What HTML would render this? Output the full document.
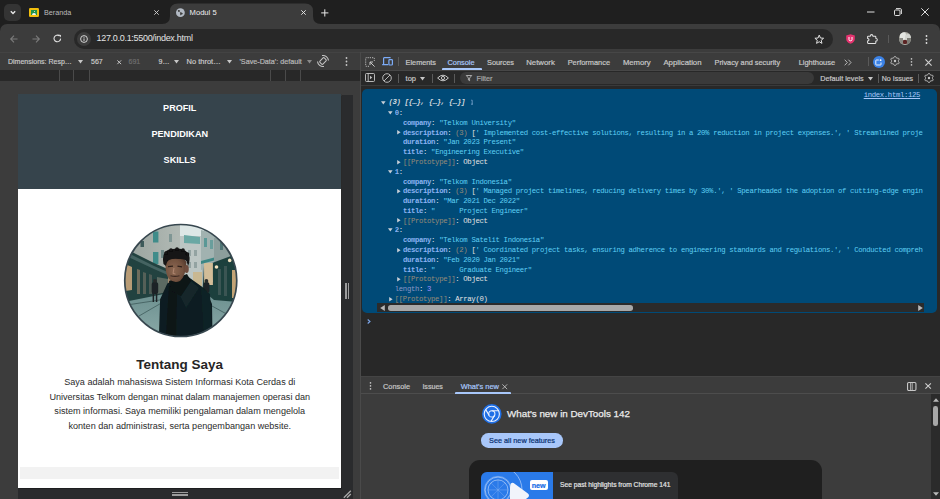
<!DOCTYPE html>
<html><head><meta charset="utf-8">
<style>
*{box-sizing:border-box;margin:0;padding:0}
html,body{width:940px;height:499px;overflow:hidden;background:#1f1f1f;font-family:"Liberation Sans",sans-serif;color:#e3e3e3;position:relative}
.a{position:absolute}
.t{position:absolute;white-space:pre;line-height:1}
.u{-webkit-text-stroke:0.2px currentColor}
svg{position:absolute;overflow:visible}
.m{font-family:"Liberation Mono",monospace}
</style></head><body>
<!-- TAB STRIP -->
<div class="a" style="left:0;top:0;width:940px;height:24px;background:#1f1f1f"></div>
<div class="a" style="left:4px;top:4px;width:17px;height:16.5px;background:#343434;border-radius:5px"></div>
<svg style="left:10px;top:10px" width="6" height="5" viewBox="0 0 6 5"><path d="M0.8 1.2 L3 3.4 L5.2 1.2" fill="none" stroke="#e8e8e8" stroke-width="1.4"/></svg>
<!-- classroom favicon -->
<div class="a" style="left:29.2px;top:8px;width:10px;height:8.5px;background:#f2bf0e;border-radius:1.2px"></div>
<div class="a" style="left:31px;top:9.8px;width:6.4px;height:5px;background:#21934a"></div>
<div class="a" style="left:33.5px;top:10.6px;width:1.5px;height:1.5px;background:#e8f0e8;border-radius:1px"></div>
<div class="a" style="left:32.4px;top:12.8px;width:3.8px;height:2px;background:#f4f6f0;border-radius:2px 2px 0 0"></div>
<div class="t" style="left:44px;top:9.3px;font-size:7.2px;color:#bdbdbd">Beranda</div>
<svg style="left:154.2px;top:10.2px" width="5" height="5" viewBox="0 0 5 5"><path d="M0.3 0.3L4.7 4.7M4.7 0.3L0.3 4.7" stroke="#d0d0d0" stroke-width="0.95"/></svg>
<!-- active tab -->
<svg style="left:162px;top:3.3px" width="160" height="21" viewBox="0 0 160 21"><path d="M0 21 Q8 21 8 13 L8 8 Q8 0.5 16 0.5 L143 0.5 Q151 0.5 151 8 L151 13 Q151 21 159 21 Z" fill="#3c3c3c"/></svg>
<svg style="left:175.8px;top:7.6px" width="9" height="9.4" viewBox="0 0 9 9.4"><circle cx="4.4" cy="4.7" r="4.4" fill="#b3bac4"/><path d="M1.8 2.2Q3 1.6 4 2.4Q4.4 3.4 3.4 3.8Q2.6 4.2 2.2 3.4Z" fill="#3c3c3c"/><path d="M3.8 4.4Q5.4 4.2 6.6 5.2Q7.2 6 6.2 6.2Q5 6.4 4.6 7.4Q4 6.6 4.2 5.6Z" fill="#3c3c3c"/></svg>
<div class="t" style="left:189.6px;top:9.2px;font-size:7.6px;color:#f0f0f0">Modul 5</div>
<svg style="left:300.8px;top:10.2px" width="5" height="5" viewBox="0 0 5 5"><path d="M0.3 0.3L4.7 4.7M4.7 0.3L0.3 4.7" stroke="#e8e8e8" stroke-width="0.95"/></svg>
<svg style="left:321px;top:9px" width="8" height="8" viewBox="0 0 8 8"><path d="M3.8 0.3V7.5M0.2 3.9H7.4" stroke="#e8e8e8" stroke-width="1"/></svg>
<!-- window controls -->
<svg style="left:867px;top:11px" width="8" height="2" viewBox="0 0 8 2"><path d="M0 1H7.5" stroke="#e0e0e0" stroke-width="1"/></svg>
<svg style="left:894px;top:8px" width="8" height="8" viewBox="0 0 8 8"><rect x="0.5" y="2" width="5.5" height="5.5" rx="1" fill="none" stroke="#e0e0e0" stroke-width="1"/><path d="M2 0.6H6.2Q7.4 0.6 7.4 1.8V6" fill="none" stroke="#e0e0e0" stroke-width="1"/></svg>
<svg style="left:921px;top:8px" width="8" height="8" viewBox="0 0 8 8"><path d="M0.3 0.3L7.7 7.7M7.7 0.3L0.3 7.7" stroke="#e0e0e0" stroke-width="1"/></svg>
<!-- TOOLBAR -->
<div class="a" style="left:0;top:24px;width:940px;height:29px;background:#3c3c3c;border-radius:7px 7px 0 0"></div>
<svg style="left:9.5px;top:34.5px" width="8" height="8" viewBox="0 0 8 8"><path d="M7.5 4H0.8M4 0.7L0.7 4L4 7.3" fill="none" stroke="#7b7b7b" stroke-width="1.1"/></svg>
<svg style="left:31.5px;top:34.5px" width="8" height="8" viewBox="0 0 8 8"><path d="M0.5 4H7.2M4 0.7L7.3 4L4 7.3" fill="none" stroke="#7b7b7b" stroke-width="1.1"/></svg>
<svg style="left:53px;top:34px" width="9" height="9" viewBox="0 0 9 9"><path d="M7.6 4.6A3.3 3.3 0 1 1 6.4 1.9" fill="none" stroke="#e0e0e0" stroke-width="1.1"/><path d="M5.2 0.6L8 0.9L7.7 3.6Z" fill="#e0e0e0"/></svg>
<div class="a" style="left:74px;top:28.7px;width:759px;height:20.1px;background:#282828;border-radius:10px"></div>
<div class="a" style="left:76.5px;top:31.7px;width:14px;height:14px;background:#3c3c3c;border-radius:7px"></div>
<svg style="left:79.5px;top:34.7px" width="8" height="8" viewBox="0 0 8 8"><circle cx="4" cy="4" r="3.4" fill="none" stroke="#e3e3e3" stroke-width="0.9"/><path d="M4 3.4V6" stroke="#e3e3e3" stroke-width="0.9"/><circle cx="4" cy="2.2" r="0.5" fill="#e3e3e3"/></svg>
<div class="t" style="left:96.5px;top:34.4px;font-size:9px;letter-spacing:-0.3px;color:#e3e3e3">127.0.0.1:5500/index.html</div>
<svg style="left:813.8px;top:34.4px" width="10.5" height="10" viewBox="0 0 24 23"><path d="M12 2.5L14.8 9.2L22 9.8L16.5 14.5L18.2 21.5L12 17.8L5.8 21.5L7.5 14.5L2 9.8L9.2 9.2Z" fill="none" stroke="#e3e3e3" stroke-width="2.3" stroke-linejoin="round"/></svg>
<svg style="left:845.5px;top:34.2px" width="9" height="10" viewBox="0 0 9 10"><path d="M4.5 0.2L8.8 1.6V5Q8.8 8.2 4.5 9.8Q0.2 8.2 0.2 5V1.6Z" fill="#e5336f"/><path d="M3 3V5.6Q3 6.8 4.5 6.8Q6 6.8 6 5.6V3" fill="none" stroke="#fff" stroke-width="1"/></svg>
<svg style="left:866.8px;top:34px" width="11" height="10" viewBox="0 0 11 10"><path d="M1.2 2.2H3.2Q3.4 0.6 4.6 0.6Q5.8 0.6 6 2.2H8.2Q8.8 2.2 8.8 2.8V4.2Q10.3 4.4 10.3 5.7Q10.3 7 8.8 7.2V8.8Q8.8 9.4 8.2 9.4H1.2Q0.6 9.4 0.6 8.8V7Q2 6.8 2 5.7Q2 4.6 0.6 4.4V2.8Q0.6 2.2 1.2 2.2Z" fill="none" stroke="#e3e3e3" stroke-width="1.05"/></svg>
<div class="a" style="left:888px;top:34.7px;width:1px;height:8.2px;background:#5a5a5a"></div>
<div class="a" style="left:898.7px;top:32px;width:12.5px;height:12.5px;border-radius:50%;background:#b4b4ac;overflow:hidden"><div class="a" style="left:1px;top:0;width:6px;height:8px;background:#e4e6e2;border-radius:3px"></div><div class="a" style="left:6px;top:2px;width:6px;height:7px;background:#d2d4cf;border-radius:3px"></div><div class="a" style="left:0;top:6px;width:4px;height:6px;background:#8a8a84"></div><div class="a" style="left:8.5px;top:6px;width:4px;height:6px;background:#7c7c76"></div><div class="a" style="left:4.3px;top:7.8px;width:4px;height:4.7px;background:#5a2424;border-radius:1px"></div></div>
<svg style="left:925px;top:34.5px" width="3" height="9" viewBox="0 0 3 9"><circle cx="1.5" cy="1" r="0.9" fill="#e3e3e3"/><circle cx="1.5" cy="4.5" r="0.9" fill="#e3e3e3"/><circle cx="1.5" cy="8" r="0.9" fill="#e3e3e3"/></svg>
<!-- DEVICE TOOLBAR -->
<div class="a" style="left:0;top:52px;width:360px;height:18px;background:#3c3c3c;border-top:1px solid #434343"></div>
<div class="t u" style="left:8px;top:58px;font-size:7px;color:#c7c7c7">Dimensions: Resp…</div>
<svg style="left:77.5px;top:59.5px" width="5" height="4" viewBox="0 0 5 4"><path d="M0 0H5L2.5 3.5Z" fill="#c7c7c7"/></svg>
<div class="t u" style="left:91px;top:58px;font-size:7px;color:#c7c7c7">567</div>
<svg style="left:117.3px;top:59.6px" width="4.5" height="4.5" viewBox="0 0 5 5"><path d="M0.4 0.4L4.6 4.6M4.6 0.4L0.4 4.6" stroke="#c7c7c7" stroke-width="1.1"/></svg>
<div class="t u" style="left:128.5px;top:58px;font-size:7px;color:#6e6e6e">691</div>
<div class="t u" style="left:158.5px;top:58px;font-size:7px;color:#c7c7c7">9…</div>
<svg style="left:174px;top:59.5px" width="5" height="4" viewBox="0 0 5 4"><path d="M0 0H5L2.5 3.5Z" fill="#c7c7c7"/></svg>
<div class="t u" style="left:186.5px;top:57.8px;font-size:7.5px;color:#c7c7c7">No throt…</div>
<svg style="left:227px;top:59.5px" width="5" height="4" viewBox="0 0 5 4"><path d="M0 0H5L2.5 3.5Z" fill="#c7c7c7"/></svg>
<div class="t u" style="left:239.5px;top:58px;font-size:7.2px;color:#b8b8b8">'Save-Data': default</div>
<svg style="left:307px;top:59.5px" width="5" height="4" viewBox="0 0 5 4"><path d="M0 0H5L2.5 3.5Z" fill="#8a8a8a"/></svg>
<svg style="left:317.3px;top:55.3px" width="12" height="12" viewBox="0 0 12 12"><g transform="rotate(45 6 6)"><rect x="3.9" y="2.9" width="4.2" height="6.2" rx="0.9" fill="none" stroke="#c7c7c7" stroke-width="1"/></g><path d="M5.04 0.58A5.5 5.5 0 0 1 11.48 5.52" fill="none" stroke="#c7c7c7" stroke-width="1.1"/><path d="M6.96 11.42A5.5 5.5 0 0 1 0.52 6.48" fill="none" stroke="#c7c7c7" stroke-width="1.1"/></svg>
<svg style="left:344.5px;top:57px" width="3" height="9" viewBox="0 0 3 9"><circle cx="1.5" cy="1" r="0.9" fill="#c7c7c7"/><circle cx="1.5" cy="4.5" r="0.9" fill="#c7c7c7"/><circle cx="1.5" cy="8" r="0.9" fill="#c7c7c7"/></svg>
<!-- RULER -->
<div class="a" style="left:0;top:70px;width:360px;height:11px;background:#282828"></div>
<div class="a" style="left:58.8px;top:70px;width:1px;height:11px;background:#4a4a4a"></div>
<div class="a" style="left:73px;top:70px;width:1px;height:11px;background:#4a4a4a"></div>
<div class="a" style="left:88.7px;top:70px;width:1px;height:11px;background:#4a4a4a"></div>
<div class="a" style="left:270px;top:70px;width:1px;height:11px;background:#4a4a4a"></div>
<div class="a" style="left:285.3px;top:70px;width:1px;height:11px;background:#4a4a4a"></div>
<div class="a" style="left:300px;top:70px;width:1px;height:11px;background:#4a4a4a"></div>
<!-- VIEWPORT -->
<div class="a" style="left:0;top:81px;width:360px;height:418px;background:#3c3c3c"></div>
<div class="a" style="left:341.5px;top:94.5px;width:11.2px;height:404.5px;background:#2a2b2d"></div>
<div class="a" style="left:18px;top:487.4px;width:334.7px;height:11.6px;background:#2a2b2d"></div>
<div class="a" style="left:344.8px;top:283.4px;width:1.8px;height:15.2px;background:#9c9c9c"></div>
<div class="a" style="left:347.7px;top:283.4px;width:1.8px;height:15.2px;background:#9c9c9c"></div>
<div class="a" style="left:171.8px;top:491.6px;width:16px;height:1.7px;background:#9c9c9c"></div>
<div class="a" style="left:171.8px;top:494.3px;width:16px;height:1.7px;background:#9c9c9c"></div>
<svg style="left:343.2px;top:489.5px" width="9" height="9" viewBox="0 0 9 9"><path d="M0.8 7.8L7.8 0.8M4 7.8L7.8 4" stroke="#a8a8a8" stroke-width="1.3"/></svg>
<!-- PAGE -->
<div class="a" style="left:18.2px;top:94px;width:323.2px;height:393.9px;background:#fff;overflow:hidden;box-shadow:0 0 1px 0.5px rgba(0,0,0,0.3)">
  <div class="a" style="left:0;top:0;width:323.1px;height:95.1px;background:#36444c"></div>
  <div class="t" style="left:0;width:323.1px;text-align:center;top:10px;font-size:9.1px;font-weight:bold;color:#fff">PROFIL</div>
  <div class="t" style="left:0;width:323.1px;text-align:center;top:36.2px;font-size:9.1px;font-weight:bold;color:#fff">PENDIDIKAN</div>
  <div class="t" style="left:0;width:323.1px;text-align:center;top:62.1px;font-size:9.1px;font-weight:bold;color:#fff">SKILLS</div>
  <div class="t" style="left:0;width:323.1px;text-align:center;top:263.7px;font-size:13.5px;font-weight:bold;color:#262626">Tentang Saya</div>
  <div class="a" style="left:0;width:323.1px;top:281.2px;text-align:center;font-size:9.08px;line-height:14.55px;color:#2b2b2b;white-space:pre">Saya adalah mahasiswa Sistem Informasi Kota Cerdas di
Universitas Telkom dengan minat dalam manajemen operasi dan
sistem informasi. Saya memiliki pengalaman dalam mengelola
konten dan administrasi, serta pengembangan website.</div>
  <div class="a" style="left:1.8px;top:373.2px;width:319px;height:11.8px;background:#f2f2f2"></div>
</div>
<!-- DEVTOOLS -->
<div class="a" style="left:359.5px;top:52px;width:1px;height:447px;background:#4a4a4a"></div>
<div class="a" style="left:360.5px;top:52px;width:579.5px;height:18px;background:#3c3c3c;border-top:1px solid #474747"></div>
<div class="a" style="left:360.5px;top:69.5px;width:579.5px;height:1px;background:#474747"></div>
<div class="a" style="left:360.5px;top:70.5px;width:579.5px;height:306px;background:#282828"></div>
<!-- tab bar icons -->
<svg style="left:365px;top:56.8px" width="10" height="10" viewBox="0 0 10 10"><path d="M4 9.3H1.2Q0.7 9.3 0.7 8.8V1.2Q0.7 0.7 1.2 0.7H8.8Q9.3 0.7 9.3 1.2V4" fill="none" stroke="#c7c7c7" stroke-width="0.9" stroke-dasharray="1.2 1"/><path d="M5 5L9.6 9.6M5 5H8M5 5V8" fill="none" stroke="#c7c7c7" stroke-width="1"/></svg>
<svg style="left:382px;top:57.2px" width="11" height="9" viewBox="0 0 11 9"><path d="M1.6 7V1.4Q1.6 0.7 2.3 0.7H8.6M0.2 7.7H6.2" fill="none" stroke="#7cacf8" stroke-width="1.2"/><rect x="6.9" y="2.6" width="3.5" height="5.4" rx="0.8" fill="none" stroke="#7cacf8" stroke-width="1.2"/></svg>
<div class="a" style="left:398px;top:57px;width:1px;height:9px;background:#5a5a5a"></div>
<div class="t u" style="left:405.6px;top:58.8px;font-size:7.3px;color:#c7c7c7">Elements</div>
<div class="t u" style="left:447.5px;top:58.8px;font-size:7.4px;color:#a8c7fa">Console</div>
<div class="a" style="left:442px;top:67.5px;width:40px;height:2px;background:#a8c7fa;border-radius:1px 1px 0 0"></div>
<div class="t u" style="left:487px;top:58.8px;font-size:7.36px;color:#c7c7c7">Sources</div>
<div class="t u" style="left:526.2px;top:58.8px;font-size:7.8px;color:#c7c7c7">Network</div>
<div class="t u" style="left:567.7px;top:58.8px;font-size:7.4px;color:#c7c7c7">Performance</div>
<div class="t u" style="left:622.9px;top:58.8px;font-size:7.7px;color:#c7c7c7">Memory</div>
<div class="t u" style="left:663.4px;top:58.8px;font-size:7.8px;color:#c7c7c7">Application</div>
<div class="t u" style="left:714.5px;top:58.8px;font-size:7.34px;color:#c7c7c7">Privacy and security</div>
<div class="t u" style="left:798.7px;top:58.8px;font-size:7.45px;color:#c7c7c7">Lighthouse</div>
<svg style="left:844.3px;top:58.5px" width="8" height="7" viewBox="0 0 8 7"><path d="M0.7 0.7L3.3 3.5L0.7 6.3M4.4 0.7L7 3.5L4.4 6.3" fill="none" stroke="#c7c7c7" stroke-width="0.9"/></svg>
<div class="a" style="left:868px;top:57px;width:1px;height:9px;background:#5a5a5a"></div>
<div class="a" style="left:872.8px;top:56px;width:12px;height:12px;border-radius:50%;background:#3b82e6"></div>
<svg style="left:875.3px;top:58.5px" width="7" height="7" viewBox="0 0 7 7"><path d="M3.8 1H1.3Q0.8 1 0.8 1.5V5.5Q0.8 6 1.3 6H5.5Q6 6 6 5.5V3.5" fill="none" stroke="#fff" stroke-width="0.9"/><circle cx="5.6" cy="1.2" r="0.9" fill="#fff"/></svg>
<svg style="left:889.5px;top:56.2px" width="10" height="10" viewBox="0 0 10 10"><path d="M8.30 5.00 L8.37 5.30 L8.57 5.63 L8.82 6.02 L9.02 6.46 L9.09 6.91 L8.98 7.30 L8.70 7.59 L8.27 7.75 L7.79 7.79 L7.33 7.78 L6.94 7.77 L6.65 7.86 L6.43 8.07 L6.24 8.41 L6.02 8.82 L5.74 9.21 L5.39 9.50 L5.00 9.60 L4.61 9.50 L4.26 9.21 L3.98 8.82 L3.76 8.41 L3.57 8.07 L3.35 7.86 L3.06 7.77 L2.67 7.78 L2.21 7.79 L1.73 7.75 L1.30 7.59 L1.02 7.30 L0.91 6.91 L0.98 6.46 L1.18 6.02 L1.43 5.63 L1.63 5.30 L1.70 5.00 L1.63 4.70 L1.43 4.37 L1.18 3.98 L0.98 3.54 L0.91 3.09 L1.02 2.70 L1.30 2.41 L1.73 2.25 L2.21 2.21 L2.67 2.22 L3.06 2.23 L3.35 2.14 L3.57 1.93 L3.76 1.59 L3.98 1.18 L4.26 0.79 L4.61 0.50 L5.00 0.40 L5.39 0.50 L5.74 0.79 L6.02 1.18 L6.24 1.59 L6.43 1.93 L6.65 2.14 L6.94 2.23 L7.33 2.22 L7.79 2.21 L8.27 2.25 L8.70 2.41 L8.98 2.70 L9.09 3.09 L9.02 3.54 L8.82 3.98 L8.57 4.37 L8.37 4.70 L8.30 5.00Z" fill="none" stroke="#c7c7c7" stroke-width="1" stroke-linejoin="round"/><circle cx="5" cy="5" r="1.2" fill="#c7c7c7"/></svg>
<svg style="left:910px;top:57.6px" width="3" height="8" viewBox="0 0 3 8"><circle cx="1.5" cy="0.9" r="0.8" fill="#c7c7c7"/><circle cx="1.5" cy="3.9" r="0.8" fill="#c7c7c7"/><circle cx="1.5" cy="6.9" r="0.8" fill="#c7c7c7"/></svg>
<svg style="left:925.2px;top:58.6px" width="7" height="7" viewBox="0 0 7 7"><path d="M0.4 0.4L6.6 6.6M6.6 0.4L0.4 6.6" stroke="#d0d0d0" stroke-width="1.15"/></svg>
<!-- console toolbar -->
<svg style="left:365px;top:73.3px" width="10" height="9" viewBox="0 0 10 9"><rect x="0.5" y="0.5" width="9" height="8" rx="1" fill="none" stroke="#c7c7c7" stroke-width="0.9"/><path d="M3.2 0.5V8.5" stroke="#c7c7c7" stroke-width="0.9"/><path d="M5 2.8L7.2 4.5L5 6.2Z" fill="#c7c7c7"/></svg>
<svg style="left:382px;top:73.3px" width="10" height="10" viewBox="0 0 10 10"><circle cx="5" cy="5" r="4.3" fill="none" stroke="#c7c7c7" stroke-width="0.9"/><path d="M2 8L8 2" stroke="#c7c7c7" stroke-width="0.9"/></svg>
<div class="a" style="left:398px;top:74px;width:1px;height:9px;background:#5a5a5a"></div>
<div class="t u" style="left:405.6px;top:74.6px;font-size:7.5px;color:#c7c7c7">top</div>
<svg style="left:419.8px;top:77px" width="5" height="4" viewBox="0 0 5 4"><path d="M0 0H5L2.5 3.5Z" fill="#c7c7c7"/></svg>
<div class="a" style="left:432px;top:74px;width:1px;height:9px;background:#5a5a5a"></div>
<svg style="left:437.4px;top:74.3px" width="12" height="8" viewBox="0 0 12 8"><path d="M0.6 4Q6 -1.6 11.4 4Q6 9.6 0.6 4Z" fill="none" stroke="#c7c7c7" stroke-width="1"/><circle cx="6" cy="4" r="1.6" fill="none" stroke="#c7c7c7" stroke-width="1"/></svg>
<div class="a" style="left:454.3px;top:74px;width:1px;height:9px;background:#5a5a5a"></div>
<div class="a" style="left:459.6px;top:72px;width:354.5px;height:12px;background:#3a3a3a;border-radius:6px"></div>
<svg style="left:466.4px;top:75px" width="6" height="6" viewBox="0 0 6 6"><path d="M0.3 0.5H5.7L3.6 3V5.7L2.4 5V3Z" fill="none" stroke="#c7c7c7" stroke-width="0.8"/></svg>
<div class="t u" style="left:476.5px;top:74.6px;font-size:7.2px;color:#a8a8a8">Filter</div>
<div class="t u" style="left:820.3px;top:74.6px;font-size:7.23px;color:#c7c7c7">Default levels</div>
<svg style="left:868px;top:77px" width="5" height="4" viewBox="0 0 5 4"><path d="M0 0H5L2.5 3.5Z" fill="#c7c7c7"/></svg>
<div class="a" style="left:878px;top:74px;width:1px;height:9px;background:#5a5a5a"></div>
<div class="t u" style="left:881.8px;top:74.6px;font-size:7.04px;color:#c7c7c7">No Issues</div>
<div class="a" style="left:918px;top:74px;width:1px;height:9px;background:#5a5a5a"></div>
<svg style="left:923.8px;top:72.8px" width="10" height="10" viewBox="0 0 10 10"><path d="M8.30 5.00 L8.37 5.30 L8.57 5.63 L8.82 6.02 L9.02 6.46 L9.09 6.91 L8.98 7.30 L8.70 7.59 L8.27 7.75 L7.79 7.79 L7.33 7.78 L6.94 7.77 L6.65 7.86 L6.43 8.07 L6.24 8.41 L6.02 8.82 L5.74 9.21 L5.39 9.50 L5.00 9.60 L4.61 9.50 L4.26 9.21 L3.98 8.82 L3.76 8.41 L3.57 8.07 L3.35 7.86 L3.06 7.77 L2.67 7.78 L2.21 7.79 L1.73 7.75 L1.30 7.59 L1.02 7.30 L0.91 6.91 L0.98 6.46 L1.18 6.02 L1.43 5.63 L1.63 5.30 L1.70 5.00 L1.63 4.70 L1.43 4.37 L1.18 3.98 L0.98 3.54 L0.91 3.09 L1.02 2.70 L1.30 2.41 L1.73 2.25 L2.21 2.21 L2.67 2.22 L3.06 2.23 L3.35 2.14 L3.57 1.93 L3.76 1.59 L3.98 1.18 L4.26 0.79 L4.61 0.50 L5.00 0.40 L5.39 0.50 L5.74 0.79 L6.02 1.18 L6.24 1.59 L6.43 1.93 L6.65 2.14 L6.94 2.23 L7.33 2.22 L7.79 2.21 L8.27 2.25 L8.70 2.41 L8.98 2.70 L9.09 3.09 L9.02 3.54 L8.82 3.98 L8.57 4.37 L8.37 4.70 L8.30 5.00Z" fill="none" stroke="#c7c7c7" stroke-width="1" stroke-linejoin="round"/><circle cx="5" cy="5" r="1.2" fill="#c7c7c7"/></svg>
<div class="a" style="left:360.5px;top:84.8px;width:579.5px;height:1px;background:#3a3a3a"></div>
<!-- CONSOLE MESSAGE -->
<div class="a" style="left:362px;top:88.5px;width:575px;height:224px;background:#004a77;border-radius:5px;overflow:hidden"></div>
<div class="a m" style="left:863.7px;top:92.2px;font-size:7.3px;letter-spacing:-0.35px;line-height:1;color:#a8c7fa;text-decoration:underline;white-space:pre">index.html:125</div>
<svg style="left:380.7px;top:100.5px" width="5" height="4" viewBox="0 0 5 4"><path d="M0 0.2H4.6L2.3 3.6Z" fill="#c8d0d8"/></svg>
<div class="a m" style="left:388.4px;top:98.70px;font-size:7.3px;letter-spacing:-0.35px;line-height:1;white-space:pre;width:534.90px;overflow:hidden;height:9px;padding-top:0.7px"><span style="color:#d0d8de;font-style:italic;font-weight:bold">(3) [{…}, {…}, {…}]</span></div>
<svg style="left:470px;top:99px" width="4" height="6" viewBox="0 0 4 6"><path d="M1.2 1.2H2.2V5.2M1 5.2H3" fill="none" stroke="#8fb4e0" stroke-width="0.7"/></svg>
<svg style="left:388.4px;top:111.08px" width="5" height="4" viewBox="0 0 5 4"><path d="M0 0.2H4.6L2.3 3.6Z" fill="#c8d0d8"/></svg>
<div class="a m" style="left:394.8px;top:109.48px;font-size:7.3px;letter-spacing:-0.35px;line-height:1;white-space:pre;width:528.50px;overflow:hidden;height:9px;padding-top:0.7px"><span style="color:#8ab2f2;font-weight:bold">0</span><span style="color:#e3e3e3">:</span></div>
<div class="a m" style="left:402.9px;top:119.25px;font-size:7.3px;letter-spacing:-0.35px;line-height:1;white-space:pre;width:520.40px;overflow:hidden;height:9px;padding-top:0.7px"><span style="color:#8ab2f2;font-weight:bold">company</span><span style="color:#e3e3e3">: </span><span style="color:#5fd0f5">"Telkom University"</span></div>
<svg style="left:396.6px;top:130.32px" width="4" height="5" viewBox="0 0 4 5"><path d="M0.2 0L3.6 2.3L0.2 4.6Z" fill="#c8d0d8"/></svg>
<div class="a m" style="left:402.9px;top:129.03px;font-size:7.3px;letter-spacing:-0.35px;line-height:1;white-space:pre;width:520.40px;overflow:hidden;height:9px;padding-top:0.7px"><span style="color:#8ab2f2;font-weight:bold">description</span><span style="color:#e3e3e3">: </span><span style="color:#978b78">(3)</span><span style="color:#e3e3e3"> [</span><span style="color:#5fd0f5">' Implemented cost-effective solutions, resulting in a 20% reduction in project expenses.', ' Streamlined project</span></div>
<div class="a m" style="left:402.9px;top:138.80px;font-size:7.3px;letter-spacing:-0.35px;line-height:1;white-space:pre;width:520.40px;overflow:hidden;height:9px;padding-top:0.7px"><span style="color:#8ab2f2;font-weight:bold">duration</span><span style="color:#e3e3e3">: </span><span style="color:#5fd0f5">"Jan 2023 Present"</span></div>
<div class="a m" style="left:402.9px;top:148.58px;font-size:7.3px;letter-spacing:-0.35px;line-height:1;white-space:pre;width:520.40px;overflow:hidden;height:9px;padding-top:0.7px"><span style="color:#8ab2f2;font-weight:bold">title</span><span style="color:#e3e3e3">: </span><span style="color:#5fd0f5">"Engineering Executive"</span></div>
<svg style="left:396.6px;top:159.65px" width="4" height="5" viewBox="0 0 4 5"><path d="M0.2 0L3.6 2.3L0.2 4.6Z" fill="#c8d0d8"/></svg>
<div class="a m" style="left:402.9px;top:158.35px;font-size:7.3px;letter-spacing:-0.35px;line-height:1;white-space:pre;width:520.40px;overflow:hidden;height:9px;padding-top:0.7px"><span style="color:#978b78">[[Prototype]]</span><span style="color:#e3e3e3">: </span><span style="color:#e3e3e3">Object</span></div>
<svg style="left:388.4px;top:169.72px" width="5" height="4" viewBox="0 0 5 4"><path d="M0 0.2H4.6L2.3 3.6Z" fill="#c8d0d8"/></svg>
<div class="a m" style="left:394.8px;top:168.12px;font-size:7.3px;letter-spacing:-0.35px;line-height:1;white-space:pre;width:528.50px;overflow:hidden;height:9px;padding-top:0.7px"><span style="color:#8ab2f2;font-weight:bold">1</span><span style="color:#e3e3e3">:</span></div>
<div class="a m" style="left:402.9px;top:177.90px;font-size:7.3px;letter-spacing:-0.35px;line-height:1;white-space:pre;width:520.40px;overflow:hidden;height:9px;padding-top:0.7px"><span style="color:#8ab2f2;font-weight:bold">company</span><span style="color:#e3e3e3">: </span><span style="color:#5fd0f5">"Telkom Indonesia"</span></div>
<svg style="left:396.6px;top:188.97px" width="4" height="5" viewBox="0 0 4 5"><path d="M0.2 0L3.6 2.3L0.2 4.6Z" fill="#c8d0d8"/></svg>
<div class="a m" style="left:402.9px;top:187.68px;font-size:7.3px;letter-spacing:-0.35px;line-height:1;white-space:pre;width:520.40px;overflow:hidden;height:9px;padding-top:0.7px"><span style="color:#8ab2f2;font-weight:bold">description</span><span style="color:#e3e3e3">: </span><span style="color:#978b78">(3)</span><span style="color:#e3e3e3"> [</span><span style="color:#5fd0f5">' Managed project timelines, reducing delivery times by 30%.', ' Spearheaded the adoption of cutting-edge engineering</span></div>
<div class="a m" style="left:402.9px;top:197.45px;font-size:7.3px;letter-spacing:-0.35px;line-height:1;white-space:pre;width:520.40px;overflow:hidden;height:9px;padding-top:0.7px"><span style="color:#8ab2f2;font-weight:bold">duration</span><span style="color:#e3e3e3">: </span><span style="color:#5fd0f5">"Mar 2021 Dec 2022"</span></div>
<div class="a m" style="left:402.9px;top:207.22px;font-size:7.3px;letter-spacing:-0.35px;line-height:1;white-space:pre;width:520.40px;overflow:hidden;height:9px;padding-top:0.7px"><span style="color:#8ab2f2;font-weight:bold">title</span><span style="color:#e3e3e3">: </span><span style="color:#5fd0f5">"      Project Engineer"</span></div>
<svg style="left:396.6px;top:218.3px" width="4" height="5" viewBox="0 0 4 5"><path d="M0.2 0L3.6 2.3L0.2 4.6Z" fill="#c8d0d8"/></svg>
<div class="a m" style="left:402.9px;top:217.00px;font-size:7.3px;letter-spacing:-0.35px;line-height:1;white-space:pre;width:520.40px;overflow:hidden;height:9px;padding-top:0.7px"><span style="color:#978b78">[[Prototype]]</span><span style="color:#e3e3e3">: </span><span style="color:#e3e3e3">Object</span></div>
<svg style="left:388.4px;top:228.38px" width="5" height="4" viewBox="0 0 5 4"><path d="M0 0.2H4.6L2.3 3.6Z" fill="#c8d0d8"/></svg>
<div class="a m" style="left:394.8px;top:226.78px;font-size:7.3px;letter-spacing:-0.35px;line-height:1;white-space:pre;width:528.50px;overflow:hidden;height:9px;padding-top:0.7px"><span style="color:#8ab2f2;font-weight:bold">2</span><span style="color:#e3e3e3">:</span></div>
<div class="a m" style="left:402.9px;top:236.55px;font-size:7.3px;letter-spacing:-0.35px;line-height:1;white-space:pre;width:520.40px;overflow:hidden;height:9px;padding-top:0.7px"><span style="color:#8ab2f2;font-weight:bold">company</span><span style="color:#e3e3e3">: </span><span style="color:#5fd0f5">"Telkom Satelit Indonesia"</span></div>
<svg style="left:396.6px;top:247.62px" width="4" height="5" viewBox="0 0 4 5"><path d="M0.2 0L3.6 2.3L0.2 4.6Z" fill="#c8d0d8"/></svg>
<div class="a m" style="left:402.9px;top:246.33px;font-size:7.3px;letter-spacing:-0.35px;line-height:1;white-space:pre;width:520.40px;overflow:hidden;height:9px;padding-top:0.7px"><span style="color:#8ab2f2;font-weight:bold">description</span><span style="color:#e3e3e3">: </span><span style="color:#978b78">(2)</span><span style="color:#e3e3e3"> [</span><span style="color:#5fd0f5">' Coordinated project tasks, ensuring adherence to engineering standards and regulations.', ' Conducted comprehensive</span></div>
<div class="a m" style="left:402.9px;top:256.10px;font-size:7.3px;letter-spacing:-0.35px;line-height:1;white-space:pre;width:520.40px;overflow:hidden;height:9px;padding-top:0.7px"><span style="color:#8ab2f2;font-weight:bold">duration</span><span style="color:#e3e3e3">: </span><span style="color:#5fd0f5">"Feb 2020 Jan 2021"</span></div>
<div class="a m" style="left:402.9px;top:265.88px;font-size:7.3px;letter-spacing:-0.35px;line-height:1;white-space:pre;width:520.40px;overflow:hidden;height:9px;padding-top:0.7px"><span style="color:#8ab2f2;font-weight:bold">title</span><span style="color:#e3e3e3">: </span><span style="color:#5fd0f5">"      Graduate Engineer"</span></div>
<svg style="left:396.6px;top:276.95px" width="4" height="5" viewBox="0 0 4 5"><path d="M0.2 0L3.6 2.3L0.2 4.6Z" fill="#c8d0d8"/></svg>
<div class="a m" style="left:402.9px;top:275.65px;font-size:7.3px;letter-spacing:-0.35px;line-height:1;white-space:pre;width:520.40px;overflow:hidden;height:9px;padding-top:0.7px"><span style="color:#978b78">[[Prototype]]</span><span style="color:#e3e3e3">: </span><span style="color:#e3e3e3">Object</span></div>
<div class="a m" style="left:394.8px;top:285.42px;font-size:7.3px;letter-spacing:-0.35px;line-height:1;white-space:pre;width:528.50px;overflow:hidden;height:9px;padding-top:0.7px"><span style="color:#8b98c6">length</span><span style="color:#e3e3e3">: </span><span style="color:#a190ff">3</span></div>
<svg style="left:389.4px;top:296.5px" width="4" height="5" viewBox="0 0 4 5"><path d="M0.2 0L3.6 2.3L0.2 4.6Z" fill="#c8d0d8"/></svg>
<div class="a m" style="left:394.8px;top:295.20px;font-size:7.3px;letter-spacing:-0.35px;line-height:1;white-space:pre;width:528.50px;overflow:hidden;height:9px;padding-top:0.7px"><span style="color:#978b78">[[Prototype]]</span><span style="color:#e3e3e3">: </span><span style="color:#e3e3e3">Array(0)</span></div>
<div class="a" style="left:377.1px;top:303.1px;width:546.6px;height:9.2px;background:#2b2b2b"></div>
<svg style="left:379.6px;top:304.7px" width="5" height="6" viewBox="0 0 5 6"><path d="M4.8 0L0.2 3L4.8 6Z" fill="#b8b8b8"/></svg>
<div class="a" style="left:388px;top:305.2px;width:244.6px;height:5.5px;background:#a8a8a8;border-radius:2.75px"></div>
<svg style="left:917.5px;top:304.7px" width="5" height="6" viewBox="0 0 5 6"><path d="M0.2 0L4.8 3L0.2 6Z" fill="#b8b8b8"/></svg>
<svg style="left:367.2px;top:318.8px" width="4" height="5" viewBox="0 0 4 5"><path d="M0.7 0.5L3 2.5L0.7 4.5" fill="none" stroke="#7ca5e8" stroke-width="1.1"/></svg>
<!-- DRAWER -->
<div class="a" style="left:360.5px;top:376.2px;width:579.5px;height:122.8px;background:#3c3c3c;border-top:1px solid #444"></div>
<div class="a" style="left:360.5px;top:393px;width:579.5px;height:1px;background:#4d4d4d"></div>
<svg style="left:368.5px;top:382px" width="3" height="8" viewBox="0 0 3 8"><circle cx="1.5" cy="0.9" r="0.8" fill="#c7c7c7"/><circle cx="1.5" cy="3.9" r="0.8" fill="#c7c7c7"/><circle cx="1.5" cy="6.9" r="0.8" fill="#c7c7c7"/></svg>
<div class="t u" style="left:383px;top:382.5px;font-size:7.36px;color:#c7c7c7">Console</div>
<div class="t u" style="left:422.4px;top:384.1px;font-size:7.1px;color:#c7c7c7">Issues</div>
<div class="t u" style="left:460.7px;top:382.5px;font-size:7.44px;color:#a8c7fa">What's new</div>
<svg style="left:501.5px;top:383.5px" width="5.5" height="5.5" viewBox="0 0 6 6"><path d="M0.4 0.4L5.6 5.6M5.6 0.4L0.4 5.6" stroke="#c7c7c7" stroke-width="0.9"/></svg>
<div class="a" style="left:455px;top:391.5px;width:56px;height:2px;background:#a8c7fa;border-radius:1px 1px 0 0"></div>
<svg style="left:907.2px;top:381.6px" width="9.5" height="9" viewBox="0 0 9.5 9"><rect x="0.55" y="0.55" width="8.4" height="7.9" rx="1.2" fill="none" stroke="#c7c7c7" stroke-width="1.1"/><path d="M3.6 0.5V8.5M5.2 0.5V8.5" stroke="#c7c7c7" stroke-width="0.8"/></svg>
<svg style="left:925.2px;top:382.9px" width="6.3" height="6" viewBox="0 0 6.3 6"><path d="M0.4 0.4L5.9 5.6M5.9 0.4L0.4 5.6" stroke="#d0d0d0" stroke-width="1.1"/></svg>
<!-- drawer scrollbar -->
<div class="a" style="left:931.2px;top:394px;width:8.8px;height:105px;background:#2b2b2b"></div>
<svg style="left:932.5px;top:398px" width="6" height="4" viewBox="0 0 6 4"><path d="M0 3.8L3 0.2L6 3.8Z" fill="#b8b8b8"/></svg>
<div class="a" style="left:933.3px;top:405.8px;width:4.6px;height:20px;background:#a8a8a8;border-radius:2.3px"></div>
<svg style="left:932.5px;top:492px" width="6" height="4" viewBox="0 0 6 4"><path d="M0 0.2L3 3.8L6 0.2Z" fill="#b8b8b8"/></svg>
<!-- what's new header -->
<svg style="left:481.7px;top:404px" width="20" height="20" viewBox="0 0 20 20"><circle cx="9.8" cy="9.9" r="9.8" fill="#1f6fe6"/><circle cx="9.8" cy="9.9" r="7.6" fill="none" stroke="#e8f0fe" stroke-width="1.1"/><circle cx="9.8" cy="9.9" r="3.1" fill="none" stroke="#e8f0fe" stroke-width="1.1"/><path d="M9.8 6.8H16.9M7.1 11.4L3.6 5.4M12.5 11.4L9 17.4" stroke="#e8f0fe" stroke-width="1.1"/></svg>
<div class="t u" style="left:507px;top:409.2px;font-size:9.82px;color:#ececec;-webkit-text-stroke:0.25px #ececec">What's new in DevTools 142</div>
<div class="a" style="left:481px;top:433.3px;width:82px;height:14.7px;background:#a8c7fa;border-radius:7.35px"></div>
<div class="t u" style="left:489.1px;top:437.3px;font-size:7.27px;color:#062e6f">See all new features</div>
<!-- card -->
<div class="a" style="left:469px;top:460.3px;width:352.5px;height:60px;background:#1f1f1f;border-radius:11px"></div>
<div class="a" style="left:481.2px;top:472.2px;width:196.6px;height:40px;background:#2e2f31;border-radius:6px;overflow:hidden">
  <div class="a" style="left:0;top:0;width:71.8px;height:40px;background:#2a7ae9;overflow:hidden">
    <svg style="left:0;top:0" width="72" height="40" viewBox="0 0 72 40">
      <circle cx="17" cy="17.9" r="10" fill="none" stroke="#cfe0fb" stroke-width="0.6"/>
      <circle cx="17" cy="17.9" r="12.8" fill="none" stroke="#cfe0fb" stroke-width="0.6"/>
      <circle cx="17" cy="17.9" r="13.6" fill="none" stroke="#cfe0fb" stroke-width="0.4"/>
      <circle cx="17" cy="17.9" r="24" fill="none" stroke="#cfe0fb" stroke-width="0.6"/>
      <path d="M17 7.9V27.9M7 17.9H27M10 10.9L24 24.9M24 10.9L10 24.9" stroke="#9fc2f6" stroke-width="0.35"/>
      <path d="M30 18Q30 10.8 32 11.8L46 22Q48 23.5 46 25L32 35Q30 36 30 30Z" fill="#f1f4fb" stroke="#f1f4fb" stroke-width="2" stroke-linejoin="round"/>
    </svg>
  </div>
  <div class="a" style="left:48.6px;top:7.8px;width:17.9px;height:9.6px;background:#fff;border-radius:2px"></div>
  <div class="t u" style="left:48.6px;width:17.9px;text-align:center;top:9.4px;font-size:7.2px;font-weight:bold;color:#1a6fe6">new</div>
  <div class="t u" style="left:78.8px;top:9.7px;font-size:6.7px;color:#e3e3e3">See past highlights from Chrome 141</div>
</div>
<!-- PHOTO -->
<svg style="left:123.6px;top:224.1px" width="113.5" height="113" viewBox="0 0 113.5 113">
  <defs>
    <clipPath id="pc"><circle cx="56.75" cy="56.5" r="56"/></clipPath>
    <filter id="bl" x="-5%" y="-5%" width="110%" height="110%"><feGaussianBlur stdDeviation="0.7"/></filter>
    <linearGradient id="st" x1="0" y1="0" x2="0" y2="1"><stop offset="0" stop-color="#6a8e8e"/><stop offset="1" stop-color="#8aa9a7"/></linearGradient>
    <linearGradient id="lf" x1="0" y1="0" x2="1" y2="0"><stop offset="0" stop-color="#98a29d"/><stop offset="1" stop-color="#b2bab5"/></linearGradient>
    <radialGradient id="face" cx="0.4" cy="0.55" r="0.7"><stop offset="0" stop-color="#8c6852"/><stop offset="0.6" stop-color="#73523f"/><stop offset="1" stop-color="#4e362a"/></radialGradient>
  </defs>
  <g clip-path="url(#pc)">
   <g filter="url(#bl)">
    <rect x="0" y="0" width="113.5" height="113" fill="#a6b4b2"/>
    <!-- sky -->
    <rect x="56" y="0" width="24" height="14" fill="#dde7e6"/>
    <!-- center far building -->
    <rect x="56" y="12" width="22" height="50" fill="#bcc6c4"/>
    <path d="M60 11 L76 13 L76 20 L60 19 Z" fill="#6aa8a4"/>
    <rect x="64" y="26" width="3" height="6" fill="#93a3a2"/><rect x="70" y="26" width="3" height="6" fill="#93a3a2"/>
    <rect x="64" y="38" width="3" height="6" fill="#93a3a2"/><rect x="70" y="38" width="3" height="6" fill="#93a3a2"/>
    <!-- left facade -->
    <path d="M0 0 L56 0 L56 60 L0 60 Z" fill="url(#lf)"/>
    <rect x="29" y="7.5" width="5.4" height="11" fill="#3f8c8a"/>
    <rect x="29" y="28" width="5.4" height="12" fill="#3f8c8a"/>
    <rect x="10" y="12" width="3.5" height="7" fill="#3e5a5a"/>
    <rect x="16.5" y="17" width="3.5" height="6" fill="#3e5a5a"/>
    <rect x="37" y="26" width="3" height="8" fill="#6f8a88"/>
    <rect x="45" y="10" width="3" height="8" fill="#7f9694"/>
    <!-- left storefront -->
    <path d="M0 24 L30 39 L46 46 L46 72 L0 80 Z" fill="#234240"/>
    <path d="M0 27 L30 42 L46 49 L46 52 L30 45 L0 31 Z" fill="#456462"/>
    <path d="M1 40 L8 43 L8 66 L1 67 Z" fill="#b89c76"/>
    <path d="M13 45 L16 46 L16 70 L13 70 Z" fill="#6e6c5c"/>
    <path d="M19 48 L22 49 L22 70 L19 70 Z" fill="#556058"/>
    <path d="M25 50 L28 51 L28 70 L25 70 Z" fill="#4d5a54"/>
    <path d="M33 53 L44 55 L44 68 L33 70 Z" fill="#5b6a62"/>
    <rect x="44" y="50" width="10" height="18" fill="#a48d70"/>
    <!-- right tall building -->
    <path d="M77 6 L92 10 L92 42 L77 46 Z" fill="#a1b2b0"/>
    <rect x="80" y="14" width="3" height="9" fill="#5a9896"/>
    <rect x="86" y="16" width="3" height="9" fill="#6a9e9c"/>
    <path d="M77 37 L92 33 L92 36 L77 40 Z" fill="#3c8784"/>
    <!-- right facade -->
    <path d="M90 14 L113.5 10 L113.5 40 L90 40 Z" fill="#8c9e9c"/>
    <rect x="96" y="18" width="3" height="8" fill="#4f7574"/>
    <rect x="104" y="16" width="3" height="8" fill="#4f7574"/>
    <!-- right storefront -->
    <path d="M80 42 L107 32 L113.5 30 L113.5 80 L78 76 Z" fill="#1f3f3e"/>
    <path d="M80 40 L86 38.8 L88.9 58 L80.4 60 Z" fill="#d4bf9a"/>
    <rect x="80.4" y="39" width="8.5" height="22" fill="#d2bd98"/>
    <rect x="94" y="45" width="3" height="26" fill="#3a5452"/>
    <rect x="100" y="42" width="3" height="30" fill="#3a5452"/>
    <rect x="108" y="46" width="4" height="28" fill="#c3a476"/>
    <circle cx="92.5" cy="43" r="1.8" fill="#f2e2bf"/>
    <circle cx="105.7" cy="36.4" r="1.8" fill="#f2e2bf"/>
    <rect x="69" y="48" width="9" height="14" fill="#c9b892"/>
    <!-- street -->
    <path d="M0 78 L40 70 L50 66 L78 66 L90 76 L113.5 78 L113.5 113 L0 113 Z" fill="url(#st)"/>
    <path d="M15 92 L40 77.5 M6 80.5 L39 75.5 M113.5 96 L88 82" stroke="#3f5a5a" stroke-width="0.8"/>
    <!-- walkers -->
    <rect x="27.7" y="58" width="6.5" height="12" rx="2.5" fill="#1c2426"/>
    <circle cx="31" cy="57" r="2" fill="#262a2a"/>
    <rect x="28.6" y="69" width="1.5" height="9" fill="#1c2426"/><rect x="31.8" y="69" width="1.5" height="9" fill="#1c2426"/>
    <rect x="79.4" y="58" width="6" height="11" rx="2.5" fill="#1c2426"/>
    <circle cx="82.4" cy="57" r="1.9" fill="#262a2a"/>
    <!-- coat -->
    <path d="M34.9 113 L36.1 75.3 L43.3 59.6 L54.1 53.6 L63.7 52.4 L68.6 56 L77 62 L82 66 L88 80 L88.5 113 Z" fill="#0f1e20"/>
    <path d="M45 62 L53 58 L52 113 L42 113 Z" fill="#0a1415"/>
    <path d="M64 54 L75 64 L62 84 L56 72 Z" fill="#13272a"/>
    <path d="M77 63 L86 70 L88 113 L80 113 Z" fill="#112325"/>
    <!-- neck / scarf -->
    <path d="M45 57 L63 50 L67 57 L57 72 L47 67 Z" fill="#0d1213"/>
    <!-- face -->
    <path d="M41.5 38 Q41 50 45 55 Q50 59.5 56 57 Q62 52 62.5 38 Q59 32 51 32 Q44 32 41.5 38Z" fill="url(#face)"/>
    <ellipse cx="62.6" cy="45" rx="2.2" ry="4" fill="#6e4c3c"/>
    <path d="M44 42.6 L49 42.2 M53.5 42.2 L58 42.8" stroke="#2e201a" stroke-width="1.3"/>
    <path d="M50 44 L49 49.5 L51.5 50" stroke="#b08670" stroke-width="1" fill="none"/>
    <path d="M46.5 51.8 Q51 53 55.5 51.8" stroke="#3e2a22" stroke-width="1.1" fill="none"/>
    <!-- hair -->
    <path d="M39.5 40 Q38 32 41 28 Q44 25 49 25 Q54 24 59 25.5 Q64.5 27.5 65.5 33 Q66 38 64 42 L62.5 37 Q60 34.5 55 35 Q49 34 45 36 Q42.5 37.5 42 42 Z" fill="#121212"/>
    <circle cx="42" cy="29" r="1.8" fill="#121212"/><circle cx="47" cy="26" r="1.8" fill="#121212"/><circle cx="53" cy="25" r="1.8" fill="#121212"/><circle cx="59" cy="26" r="1.8" fill="#121212"/><circle cx="63.5" cy="30" r="1.8" fill="#121212"/>
   </g>
  </g>
  <circle cx="56.75" cy="56.5" r="56" fill="none" stroke="#37474f" stroke-width="1.7"/>
</svg>
</body></html>
